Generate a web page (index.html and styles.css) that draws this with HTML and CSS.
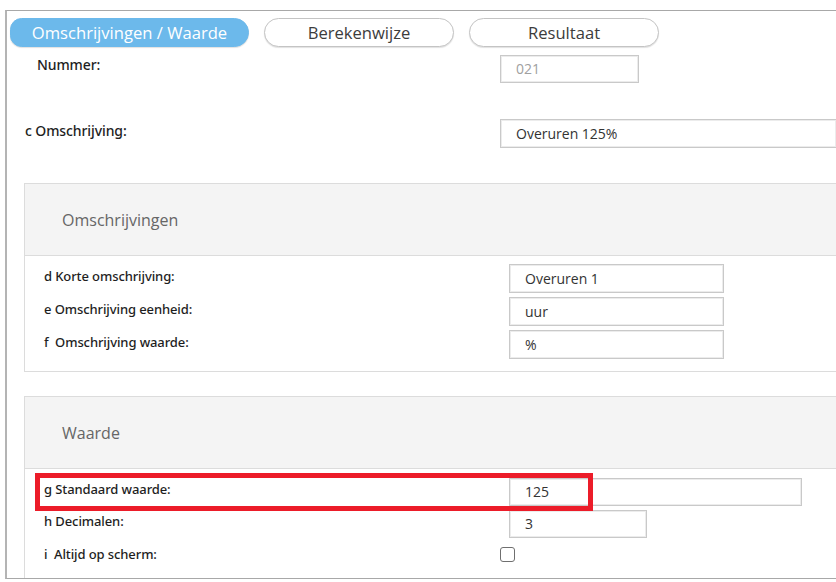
FILE: index.html
```html
<!DOCTYPE html>
<html lang="nl">
<head>
<meta charset="utf-8">
<title>Omschrijvingen / Waarde</title>
<link rel="stylesheet" href="styles.css">
</head>
<body>
<div class="frame">
  <div class="tabs">
    <div class="tab active">Omschrijvingen / Waarde</div>
    <div class="tab">Berekenwijze</div>
    <div class="tab">Resultaat</div>
  </div>

  <div class="top-row nummer">
    <div class="label">Nummer:</div>
    <div class="input small muted">021</div>
  </div>
  <div class="top-row omschr">
    <div class="label">c Omschrijving:</div>
    <div class="input wide">Overuren 125%</div>
  </div>

  <div class="section first">
    <div class="section-head">Omschrijvingen</div>
    <div class="section-body">
      <div class="row"><div class="label">d Korte omschrijving:</div><div class="input mid">Overuren 1</div></div>
      <div class="row"><div class="label">e Omschrijving eenheid:</div><div class="input mid">uur</div></div>
      <div class="row"><div class="label">f&nbsp; Omschrijving waarde:</div><div class="input mid">%</div></div>
    </div>
  </div>

  <div class="section second">
    <div class="section-head">Waarde</div>
    <div class="section-body">
      <div class="row r28"><div class="label">g Standaard waarde:</div><div class="input long">125</div></div>
      <div class="row r28"><div class="label">h Decimalen:</div><div class="input short">3</div></div>
      <div class="row check"><div class="label">i&nbsp; Altijd op scherm:</div><div class="checkbox"></div></div>
    </div>
  </div>

  <div class="highlight"></div>
</div>
</body>
</html>
```

FILE: styles.css
```css
html, body {
  margin: 0;
  padding: 0;
  background: #ffffff;
  overflow: hidden;
  width: 836px;
  height: 582px;
}

.frame {
  position: relative;
  box-sizing: border-box;
  margin: 10px 0 0 5px;
  width: 831px;
  height: 569px;
  border: 1px solid #a8a8a8;
  border-right: none;
  border-left-width: 2px;
  border-left-color: #b4b4b4;
  font-family: "Open Sans", "Liberation Sans", sans-serif;
  overflow: hidden;
}

.tabs {
  display: flex;
  gap: 15px;
  padding: 7px 0 0 3px;
}

.tab {
  box-sizing: border-box;
  width: 190px;
  height: 29px;
  border: 1px solid #c4c4c4;
  border-radius: 15px;
  box-shadow: 0 1px 1px rgba(0,0,0,0.12);
  background: #ffffff;
  color: #3c3c3c;
  font-size: 16.6px;
  line-height: 27px;
  text-align: center;
}

.tab.active {
  width: 239px;
  background: #6cb9eb;
  border-color: #6cb9eb;
  color: #ffffff;
  border-radius: 12px 15px 15px 12px;
}

.label {
  font-family: "Noto Sans", "DejaVu Sans", sans-serif;
  font-size: 13px;
  font-weight: 500;
  color: #1e1e1e;
  letter-spacing: -0.1px;
}

.input {
  box-sizing: border-box;
  height: 29px;
  border: 1px solid #c9c9c9;
  box-shadow: inset 0 0 0 1px #ececec;
  font-size: 14px;
  color: #333333;
  line-height: 27px;
  padding-left: 15px;
}

.input.muted { color: #a0a0a0; }

.top-row {
  display: flex;
  align-items: flex-start;
}

.top-row .label { font-size: 14px; }

.top-row.nummer {
  margin-top: 8px;
  padding-left: 30px;
}
.top-row.nummer .label {
  width: 463px;
  line-height: 20px;
}
.input.small { width: 139px; height: 28px; line-height: 26px; }

.top-row.omschr {
  margin-top: 36px;
  padding-left: 18px;
}
.top-row.omschr .label {
  width: 475px;
  padding-top: 2px;
  line-height: 20px;
}
.input.wide { flex: 1; border-right: none; }

.section {
  box-sizing: border-box;
  margin-left: 17px;
  border: 1px solid #dcdcdc;
  border-right: none;
}

.section.first { margin-top: 35px; padding-bottom: 12px; }
.section.second { margin-top: 24px; height: 200px; }

.section-head {
  box-sizing: border-box;
  height: 72px;
  background: #f4f4f4;
  border-bottom: 1px solid #dcdcdc;
  padding-left: 37px;
  font-size: 16px;
  color: #666666;
  line-height: 72px;
}

.section-body {
  display: flex;
  flex-direction: column;
  gap: 4px;
  padding: 8px 0 0 19px;
}

.section.second .section-body { padding-top: 9px; }

.row {
  display: flex;
  align-items: center;
  height: 29px;
}
.row.r28 { height: 28px; }
.row.r28 .input { height: 28px; line-height: 26px; }

.row .label { width: 465px; margin-top: -6px; }

.input.mid { width: 215px; }
.input.long { width: 293px; }
.input.short { width: 138px; }

.row.check { height: 24px; }
.row.check .label { margin-top: 0; }

.checkbox {
  box-sizing: border-box;
  width: 15px;
  height: 15px;
  margin-left: -9px;
  border: 1px solid #6f6f6f;
  border-radius: 3px;
  background: #ffffff;
}

.highlight {
  position: absolute;
  left: 28px;
  top: 462px;
  width: 558px;
  height: 38px;
  box-sizing: border-box;
  border: 5px solid #ec1c29;
}
```
